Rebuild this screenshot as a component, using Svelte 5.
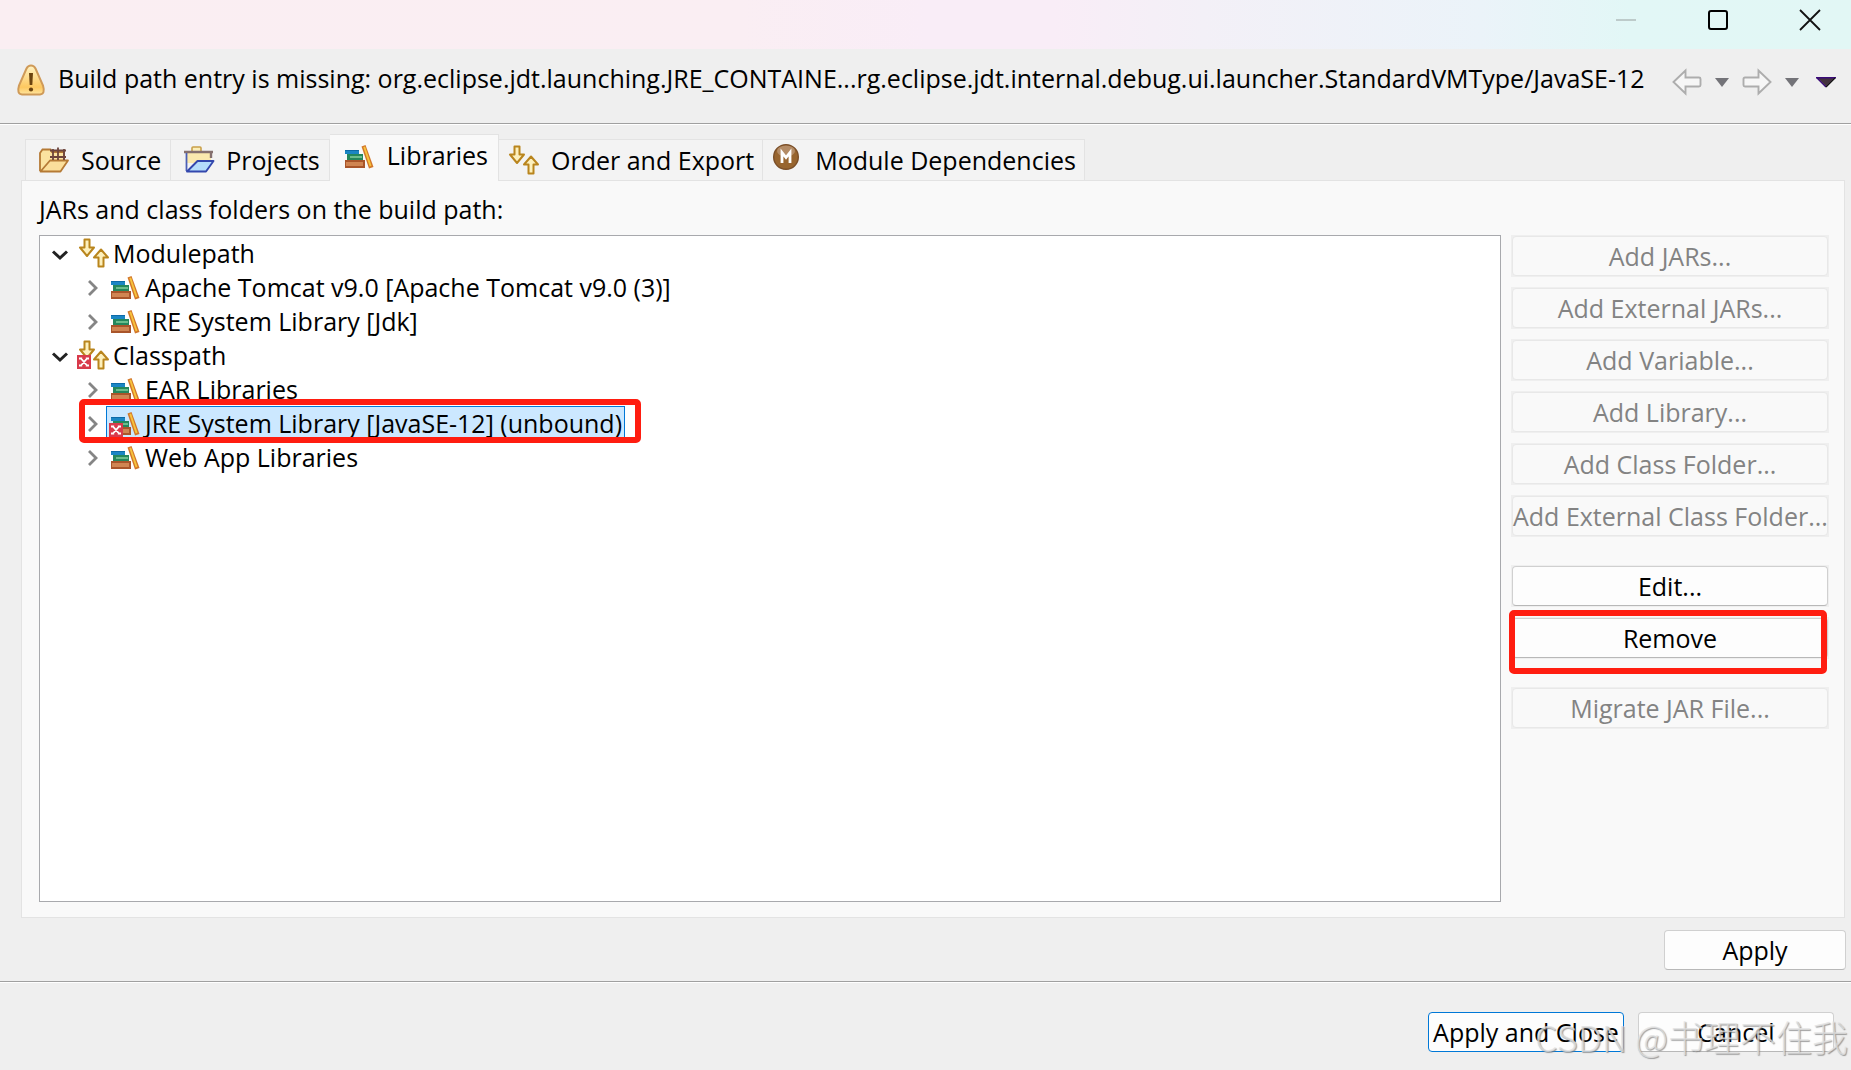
<script>
  const tabs = [
    { id: 'source', label: 'Source', icon: 'source' },
    { id: 'projects', label: 'Projects', icon: 'projects' },
    { id: 'libraries', label: 'Libraries', icon: 'books' },
    { id: 'order', label: 'Order and Export', icon: 'arrows' },
    { id: 'modules', label: 'Module Dependencies', icon: 'module' }
  ];
  let active = $state('libraries');

  const tree = [
    {
      label: 'Modulepath',
      items: [{ label: 'Apache Tomcat v9.0 [Apache Tomcat v9.0 (3)]' }, { label: 'JRE System Library [Jdk]' }]
    },
    {
      label: 'Classpath',
      error: true,
      items: [
        { label: 'EAR Libraries' },
        { label: 'JRE System Library [JavaSE-12] (unbound)', error: true, selected: true },
        { label: 'Web App Libraries' }
      ]
    }
  ];

  const groups = [
    [
      { label: 'Add JARs...', disabled: true },
      { label: 'Add External JARs...', disabled: true },
      { label: 'Add Variable...', disabled: true },
      { label: 'Add Library...', disabled: true },
      { label: 'Add Class Folder...', disabled: true },
      { label: 'Add External Class Folder...', disabled: true }
    ],
    [{ label: 'Edit...' }, { label: 'Remove', marked: true }],
    [{ label: 'Migrate JAR File...', disabled: true }]
  ];
</script>

{#snippet books(error)}
  <svg class="ico" viewBox="0 0 30 30" aria-hidden="true">
    <rect x="0" y="9" width="14" height="4" fill="#1b86c4" />
    <rect x="0" y="9" width="14" height="1" fill="#0d6aa8" />
    <rect x="2" y="13" width="16" height="6" fill="#25875c" />
    <rect x="5" y="15" width="12" height="2" fill="#6bbd8c" />
    <rect x="0" y="19" width="20" height="8" fill="#a9552a" />
    <rect x="1" y="21" width="17" height="4" fill="#d08552" />
    <path d="M16.500 5.500l4-1.500 8 22-4.500 1.500z" fill="#d2762a" />
    <path d="M18.300 6l1.800-.6 6.400 19.400-1.800.7z" fill="#f6c33c" />
    {#if error}{@render cross()}{/if}
  </svg>
{/snippet}

{#snippet cross()}
  <rect x="-2" y="15" width="14" height="14" fill="#d83a4b" />
  <path d="M0 18.500h3.200M6.800 18.500H10M0 25.500h3.200M6.800 25.500H10M2 18.500l6 7M8 18.500l-6 7" stroke="#fff" stroke-width="1.900" fill="none" />
{/snippet}

{#snippet arrows(error)}
  <svg class="ico" viewBox="0 0 30 30" aria-hidden="true">
    <g fill="#fdf0bd" stroke="#b9851d" stroke-width="2" stroke-linejoin="round">
      <path d="M5.500 1.500h5v8h4.500L8 18 1 9.500h4.500z" />
      <path d="M19.500 28.500h5v-9H29L22 11.500l-7 8h4.500z" />
    </g>
    {#if error}{@render cross()}{/if}
  </svg>
{/snippet}

{#snippet tabIcon(name)}
  {#if name === 'books'}
    {@render books(false)}
  {:else if name === 'arrows'}
    {@render arrows(false)}
  {:else if name === 'source'}
    <svg class="ico" viewBox="0 0 30 30" aria-hidden="true">
      <path d="M1 26V8l2.500-3.500h8L13 7h12v8" fill="#fbe3a0" stroke="#b57a35" stroke-width="1.800" />
      <path d="M1.500 26.500L11 15.500h18L21.500 26.500z" fill="#fbdf9b" stroke="#b57a35" stroke-width="1.800" stroke-linejoin="round" />
      <path d="M11 5.500h16M11 12h16M14 4v11M19 2.500v12.500M25 4v11" stroke="#6d443c" stroke-width="1.800" fill="none" />
    </svg>
  {:else if name === 'projects'}
    <svg class="ico" viewBox="0 0 30 30" aria-hidden="true">
      <path d="M8 6V3q0-1 1-1h7q1 0 1 1v3" fill="#fbeeb8" stroke="#c9a04a" stroke-width="1.600" />
      <path d="M3 7h24v11H3z" fill="#fbe9ae" />
      <path d="M0 7h29M27 7v6" stroke="#85706f" stroke-width="2.400" fill="none" />
      <path d="M2.500 8v18" stroke="#4b5fb5" stroke-width="1.800" fill="none" />
      <path d="M3 26.500l8-8 2.500-2.500h16L22 26.500z" fill="#b5ddfb" stroke="#3347ad" stroke-width="1.900" stroke-linejoin="round" />
    </svg>
  {:else}
    <svg class="ico" viewBox="0 0 30 30" aria-hidden="true">
      <circle cx="13" cy="12" r="12.300" fill="#98652f" stroke="#7b4f28" stroke-width="1.400" />
      <ellipse cx="13" cy="6" rx="9" ry="5.500" fill="#c3a184" opacity=".65" />
      <path d="M9 18V7.500l4 5 4-5V18" fill="none" stroke="#fff" stroke-width="2.800" />
    </svg>
  {/if}
{/snippet}

<div class="dialog">
  <header class="titlebar">
    <button class="win" aria-label="Minimize" disabled>
      <svg viewBox="0 0 20 20"><path d="M0 10h20" stroke="#b9c6c6" stroke-width="1.800" /></svg>
    </button>
    <button class="win" aria-label="Maximize">
      <svg viewBox="0 0 20 20"><rect x="1" y="1" width="18" height="18" rx="2" fill="none" stroke="#000" stroke-width="2" /></svg>
    </button>
    <button class="win" aria-label="Close">
      <svg viewBox="0 0 20 20"><path d="M0 0l20 20M20 0L0 20" stroke="#111" stroke-width="1.800" /></svg>
    </button>
  </header>

  <div class="message">
    <svg class="warn" viewBox="0 0 28 32" aria-hidden="true">
      <defs>
        <linearGradient id="warnFill" x1="0" y1="0" x2="0" y2="1">
          <stop offset="0" stop-color="#fff3c4" />
          <stop offset=".75" stop-color="#fdc860" />
          <stop offset="1" stop-color="#ffe6a0" />
        </linearGradient>
      </defs>
      <path d="M14 1.500q3 0 4.500 3l7.500 17q2.500 8.500-3 9H5q-5.500-.5-3-9L9.500 4.500Q11 1.500 14 1.500z" fill="url(#warnFill)" stroke="#cf9a58" stroke-width="2" />
      <path d="M12 9h4L15.300 21h-2.600z" fill="#6b430f" />
      <circle cx="14" cy="25.500" r="2.100" fill="#6b430f" />
    </svg>
    <p>Build path entry is missing: org.eclipse.jdt.launching.JRE_CONTAINE...rg.eclipse.jdt.internal.debug.ui.launcher.StandardVMType/JavaSE-12</p>
    <nav class="history" aria-label="History">
      <button aria-label="Back" disabled>
        <svg class="arrow" viewBox="0 0 30 26"><path d="M1.500 13L13.500 1.500v7H27q1.500 0 1.500 1.500v6q0 1.500-1.500 1.500H13.500v7z" fill="#f6f6f6" stroke="#adadad" stroke-width="1.900" /></svg>
      </button>
      <button aria-label="Back history" disabled>
        <svg class="drop" viewBox="0 0 14 9"><path d="M0 0h14L7 9z" fill="#737378" /></svg>
      </button>
      <button aria-label="Forward" disabled>
        <svg class="arrow" viewBox="0 0 30 26"><path d="M28.500 13L16.500 1.500v7H3q-1.500 0-1.500 1.500v6q0 1.500 1.500 1.500h13.500v7z" fill="#f6f6f6" stroke="#adadad" stroke-width="1.900" /></svg>
      </button>
      <button aria-label="Forward history" disabled>
        <svg class="drop" viewBox="0 0 14 9"><path d="M0 0h14L7 9z" fill="#737378" /></svg>
      </button>
      <button class="view" aria-label="View menu">
        <svg class="menu" viewBox="0 0 20 10"><path d="M1.500 1h17L10 9.500z" fill="#43323f" /><path d="M0 .7h20M1 1l9 9" stroke="#3a0a78" stroke-width="1.400" /><path d="M10 10l9-9" stroke="#111" stroke-width="1.200" /></svg>
      </button>
    </nav>
  </div>

  <main>
    <div class="tabs" role="tablist">
      {#each tabs as tab (tab.id)}
        <button class="tab" class:active={active === tab.id} role="tab" aria-selected={active === tab.id} onclick={() => (active = tab.id)}>
          {@render tabIcon(tab.icon)}
          <span>{tab.label}</span>
        </button>
      {/each}
    </div>

    <section class="panel">
      <h2>JARs and class folders on the build path:</h2>
      <div class="columns">
        <ul class="tree" role="tree">
          {#each tree as node (node.label)}
            <li role="treeitem" aria-expanded="true" aria-selected="false">
              <div class="row">
                <svg class="chev open" viewBox="0 0 16 10"><path d="M1 3.500l7 6.500 7-6.500" fill="none" stroke="#222" stroke-width="3" /></svg>
                {@render arrows(node.error)}
                <span class="name">{node.label}</span>
              </div>
              <ul role="group">
                {#each node.items as item (item.label)}
                  <li role="treeitem" aria-selected={!!item.selected}>
                    <div class="row child">
                      <svg class="chev" viewBox="0 0 10 16"><path d="M1 2l7 7-7 7" fill="none" stroke="#858585" stroke-width="2.800" /></svg>
                      <div class="entry" class:selected={item.selected}>
                        {@render books(item.error)}
                        <span class="name">{item.label}</span>
                      </div>
                      {#if item.selected}<i class="mark"></i>{/if}
                    </div>
                  </li>
                {/each}
              </ul>
            </li>
          {/each}
        </ul>

        <div class="actions">
          {#each groups as group}
            <div class="group">
              {#each group as action (action.label)}
                <div class="slot">
                  <button class="btn" disabled={action.disabled}>{action.label}</button>
                  {#if action.marked}<i class="mark"></i>{/if}
                </div>
              {/each}
            </div>
          {/each}
        </div>
      </div>
    </section>

    <div class="apply"><button class="btn">Apply</button></div>
  </main>

  <footer>
    <button class="btn primary">Apply and Close</button>
    <button class="btn">Cancel</button>
    <span class="watermark">CSDN @书理不住我</span>
  </footer>
</div>

<style>
  :global(body) {
    margin: 0;
  }
  .dialog {
    display: flex;
    flex-direction: column;
    min-height: 100vh;
    box-sizing: border-box;
    overflow: hidden;
    background: #efefef;
    color: #000;
    font: 25px/34px 'Open Sans', 'Noto Sans CJK SC', sans-serif;
  }
  button {
    font: inherit;
    color: inherit;
    padding: 0;
    border: 0;
    background: none;
  }
  svg {
    display: block;
    flex: none;
    overflow: visible;
  }
  ul,
  p,
  h2 {
    margin: 0;
    padding: 0;
    list-style: none;
    font: inherit;
  }
  .titlebar {
    display: flex;
    justify-content: flex-end;
    gap: 20px;
    height: 49px;
    padding-right: 5px;
    background: linear-gradient(90deg, #faeef2 0%, #faeef3 40%, #f9edf7 50%, #f9edf7 57%, #f3f0f7 65%, #ebf3f9 80%, #e2f7f6 88%, #e2f7f5 100%);
  }
  .win {
    display: grid;
    place-items: center;
    width: 72px;
    height: 40px;
  }
  .win svg {
    width: 20px;
    height: 20px;
  }
  .message {
    display: flex;
    align-items: flex-start;
    height: 75px;
    padding: 0 15px 0 17px;
    border-bottom: 1px solid #a0a0a0;
    box-shadow: 0 1px #fff;
    box-sizing: border-box;
  }
  .warn {
    width: 28px;
    height: 32px;
    margin-top: 15px;
  }
  .message p {
    flex: 1;
    min-width: 0;
    margin: 12px 0 0 13px;
    white-space: nowrap;
  }
  .history {
    display: flex;
    align-items: center;
    gap: 13px;
    margin-top: 20px;
  }
  .arrow {
    width: 30px;
    height: 26px;
  }
  .drop {
    width: 14px;
    height: 9px;
  }
  .view {
    margin-left: 4px;
  }
  .menu {
    width: 20px;
    height: 10px;
  }
  main {
    flex: 1;
    display: flex;
    flex-direction: column;
    padding: 10px 5px 11px 21px;
    border-bottom: 1px solid #a0a0a0;
    box-shadow: 0 1px #fff;
  }
  .tabs {
    display: flex;
    align-items: flex-end;
    padding-left: 4px;
  }
  .tab {
    display: flex;
    align-items: center;
    gap: 12px;
    height: 41px;
    padding: 0 9px 0 13px;
    border: 1px solid #e3e3e3;
    border-left-width: 0;
    border-bottom: 0;
    background: #f3f3f3;
    box-sizing: border-box;
    white-space: nowrap;
  }
  .tab span {
    padding-bottom: 1px;
  }
  .tab:first-child {
    border-left-width: 1px;
  }
  .tab.active {
    position: relative;
    height: 47px;
    margin-bottom: -1px;
    padding: 0 10px 5px 15px;
    background: #f9f9f9;
  }
  .tab.active ~ .tab {
    padding: 0 8px 0 10px;
  }
  .ico {
    width: 30px;
    height: 30px;
  }
  .panel {
    flex: 1;
    display: flex;
    flex-direction: column;
    margin-right: 1px;
    padding: 11px 15px 15px 17px;
    border: 1px solid #e3e3e3;
    background: #f9f9f9;
  }
  .columns {
    flex: 1;
    display: flex;
    gap: 10px;
    margin-top: 9px;
  }
  .tree {
    flex: 1;
    border: 1px solid #a8a9ad;
    background: #fff;
  }
  .row {
    position: relative;
    display: flex;
    align-items: center;
    width: max-content;
    height: 34px;
    padding-left: 12px;
  }
  .row.child {
    padding-left: 48px;
  }
  .chev {
    width: 10px;
    height: 16px;
    margin-right: 8px;
  }
  .chev.open {
    width: 16px;
    height: 10px;
    margin-right: 11px;
  }
  .name {
    margin-left: 4px;
  }
  .entry {
    display: flex;
    align-items: center;
    height: 32px;
    padding: 0 2px 0 4px;
    border: 1px solid transparent;
  }
  .entry.selected {
    border-color: #0078d7;
    background: #cce8ff;
  }
  .mark {
    position: absolute;
    inset: -7px -16px -3px 39px;
    border: 6px solid #ff1d10;
    border-radius: 5px;
    z-index: 1;
    pointer-events: none;
  }
  .actions {
    display: flex;
    flex-direction: column;
    gap: 28px;
  }
  .group {
    display: flex;
    flex-direction: column;
    gap: 10px;
  }
  .slot {
    position: relative;
    width: 318px;
    padding: 1px;
    box-sizing: border-box;
    background: #efefef;
  }
  .slot .mark {
    inset: -7px 2px -15px -2px;
  }
  .btn {
    display: block;
    width: 100%;
    height: 40px;
    padding-bottom: 1px;
    border: 1px solid #d0d0d0;
    border-bottom-color: #b8b8b8;
    border-radius: 4px;
    background: #fdfdfd;
    box-sizing: border-box;
    white-space: nowrap;
  }
  .btn:disabled {
    border-color: #e8e8e8;
    background: #f9f9f9;
    color: #838383;
  }
  .apply {
    display: flex;
    justify-content: flex-end;
    padding-top: 12px;
  }
  .apply .btn {
    width: 182px;
  }
  footer {
    position: relative;
    display: flex;
    justify-content: flex-end;
    gap: 14px;
    padding: 30px 17px 18px;
  }
  footer .btn {
    width: 196px;
  }
  .btn.primary {
    border-color: #0078d7;
  }
  .watermark {
    position: absolute;
    right: 3px;
    bottom: 14px;
    font: 300 36px/40px 'Noto Sans CJK SC', sans-serif;
    color: rgba(225, 225, 225, 0.75);
    text-shadow: 1px 1px 1px rgba(120, 120, 120, 0.7);
    white-space: nowrap;
    pointer-events: none;
  }
</style>
